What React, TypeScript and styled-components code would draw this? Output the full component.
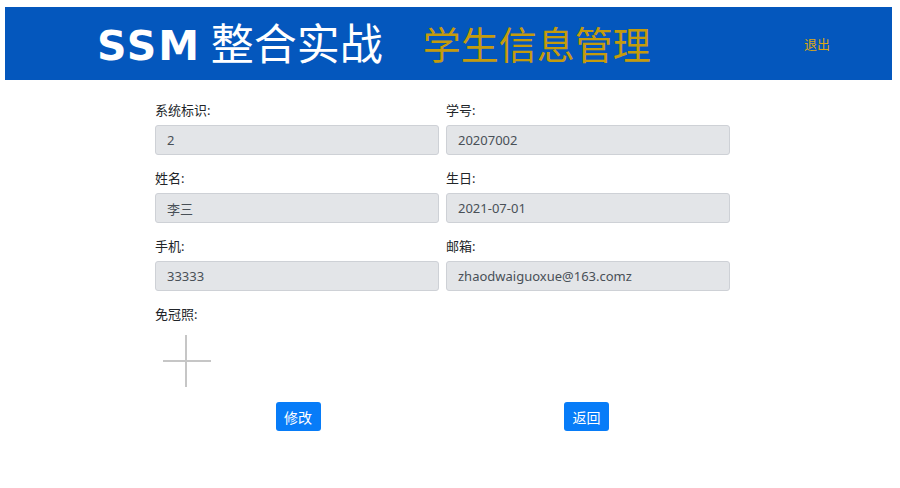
import React from 'react';
import styled, { createGlobalStyle } from 'styled-components';

const GlobalStyle = createGlobalStyle`
  html, body {
    margin: 0;
    padding: 0;
    background: #fff;
    font-family: "Noto Sans", "Noto Sans CJK SC", sans-serif;
    color: #212529;
  }
`;

type Field = { label: string; value: string };

const fields: Field[] = [
  { label: '系统标识:', value: '2' },
  { label: '学号:', value: '20207002' },
  { label: '姓名:', value: '李三' },
  { label: '生日:', value: '2021-07-01' },
  { label: '手机:', value: '33333' },
  { label: '邮箱:', value: 'zhaodwaiguoxue@163.comz' },
];

const App = () => {
  return (
    <Page>
      <GlobalStyle />
      <Header>
        <Title>
          <Latin>SSM</Latin> 整合实战
        </Title>
        <SubTitle>学生信息管理</SubTitle>
        <Logout>退出</Logout>
      </Header>
      <Form>
        {fields.map(f => (
          <FieldBox key={f.label}>
            <Label>{f.label}</Label>
            <Input readOnly value={f.value} />
          </FieldBox>
        ))}
        <PhotoBox>
          <Label>免冠照:</Label>
          <PlusWrap>
            <svg width="50" height="52" viewBox="0 0 50 52">
              <line x1="1" y1="26" x2="49" y2="26" stroke="#c6c6c6" strokeWidth="2" />
              <line x1="24" y1="0" x2="24" y2="52" stroke="#c6c6c6" strokeWidth="2" />
            </svg>
          </PlusWrap>
        </PhotoBox>
        <ButtonCell shift={1}>
          <Button>修改</Button>
        </ButtonCell>
        <ButtonCell shift={-1.5}>
          <Button>返回</Button>
        </ButtonCell>
      </Form>
    </Page>
  );
};

const Page = styled.div`
  padding: 7px 8px 0 5px;
`;

const Header = styled.header`
  height: 73px;
  background: #0457bd;
  display: flex;
  align-items: center;
  padding-left: 92px;
  box-sizing: border-box;
`;

const Title = styled.h1`
  margin: 0 0 1px;
  font-size: 43px;
  font-weight: 400;
  color: #fff;
  font-family: "Noto Sans CJK SC", sans-serif;
  line-height: 1;
`;

const Latin = styled.span`
  font-family: "DejaVu Sans", sans-serif;
  font-weight: 700;
  font-size: 41px;
  letter-spacing: 2px;
`;

const SubTitle = styled.h2`
  margin: 0 0 1px 40px;
  font-size: 38px;
  font-weight: 400;
  color: #c49b0c;
  font-family: "Noto Sans CJK SC", sans-serif;
  line-height: 1;
`;

const Logout = styled.a`
  margin-left: auto;
  margin-right: 62px;
  font-size: 13px;
  color: #dca712;
  font-family: "Noto Sans CJK SC", sans-serif;
  cursor: pointer;
`;

const Form = styled.div`
  margin: 21px 0 0 150px;
  display: grid;
  grid-template-columns: 284px 284px;
  column-gap: 7px;
  row-gap: 14px;
`;

const FieldBox = styled.div`
  display: flex;
  flex-direction: column;
`;

const PhotoBox = styled.div`
  grid-column: 1 / span 2;
  display: flex;
  flex-direction: column;
`;

const Label = styled.label`
  font-size: 13px;
  line-height: 18px;
  margin-bottom: 6px;
  color: #212529;
`;

const Input = styled.input`
  height: 30px;
  box-sizing: border-box;
  border: 1px solid #ced1d6;
  border-radius: 3px;
  background: #e3e5e8;
  padding: 0 11px;
  font-size: 13px;
  color: #495057;
  font-family: "Noto Sans", "Noto Sans CJK SC", sans-serif;
  outline: none;
`;

const PlusWrap = styled.div`
  padding: 6px 0 0 7px;
  height: 52px;
`;

const ButtonCell = styled.div<{ shift: number }>`
  display: flex;
  justify-content: center;
  margin-top: 1px;
  padding-left: ${({ shift }) => (shift > 0 ? shift * 2 : 0)}px;
  padding-right: ${({ shift }) => (shift < 0 ? -shift * 2 : 0)}px;
`;

const Button = styled.button`
  width: 45px;
  height: 29px;
  border: none;
  border-radius: 3px;
  background: #077cf8;
  color: #fff;
  font-size: 14px;
  font-family: "Noto Sans CJK SC", sans-serif;
  padding: 0;
  cursor: pointer;
`;

export default App;
